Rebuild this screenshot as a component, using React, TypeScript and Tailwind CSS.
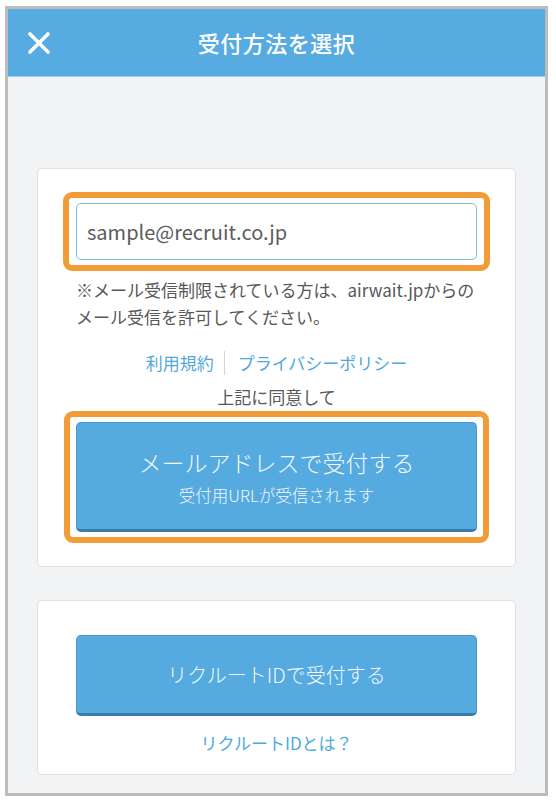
import { useState } from 'react'

const font = { fontFamily: '"Noto Sans CJK JP", "Noto Sans", sans-serif' }

function CloseIcon() {
  return (
    <svg width="24" height="24" viewBox="0 0 24 24" fill="none" stroke="white" strokeWidth="3.6" strokeLinecap="round">
      <path d="M3 3 L21 21" />
      <path d="M21 3 L3 21" />
    </svg>
  )
}

function Highlight({ className }: { className: string }) {
  return <div className={`pointer-events-none absolute rounded-[9px] border-[6px] border-[#f29c38] ${className}`} />
}

export default function App() {
  const [email, setEmail] = useState('sample@recruit.co.jp')

  return (
    <div className="w-[556px] h-[808px] bg-white pt-[6px] pl-[5px]" style={font}>
      <div className="w-[543px] h-[790px] border-[3px] border-[#bcbcbc] bg-[#f2f3f5] flex flex-col">
        {/* header */}
        <header className="relative h-[68px] shrink-0 bg-[#56abe1] border-b border-[#9ad0ee] flex items-center justify-center">
          <button className="absolute left-[19px] top-[22px]">
            <CloseIcon />
          </button>
          <h1 className="text-white text-[22px] font-medium tracking-[0.5px]">受付方法を選択</h1>
        </header>

        <main className="flex flex-col gap-[33px] px-[29px] pt-[91px]">
          {/* mail card */}
          <section className="bg-white border border-[#dedfe2] rounded-[5px] px-[38px] pt-[34px] pb-[34px]">
            <div className="relative">
              <Highlight className="-inset-x-[13px] -inset-y-[11px]" />
              <input
                value={email}
                onChange={(e) => setEmail(e.target.value)}
                className="w-full h-[57px] rounded-[5px] border-[1.5px] border-[#79bde9] px-[10px] text-[20px] text-[#5c5c5c] outline-none"
                style={font}
              />
            </div>

            <p className="mt-[16px] text-[17px] leading-[27px] text-[#585858]">
              ※メール受信制限されている方は、airwait.jpからの
              <br />
              メール受信を許可してください。
            </p>

            <div className="mt-[21px] flex items-center justify-center text-[17px] leading-[24px] text-[#4fa9de]">
              <a className="pr-[10px]">利用規約</a>
              <span className="h-[24px] w-px bg-[#d5d5d5]" />
              <a className="pl-[13px]">プライバシーポリシー</a>
            </div>

            <p className="mt-[10px] text-center text-[17px] leading-[24px] text-[#585858]">上記に同意して</p>

            <div className="relative mt-[13px]">
              <Highlight className="-inset-x-[12px] -inset-y-[11px]" />
              <button className="w-full h-[110px] rounded-[5px] bg-[#55aae0] border border-[#4a97c9] border-b-[3px] border-b-[#3b7bab] flex flex-col items-center justify-center text-[#f2f8fc] font-light">
                <span className="text-[23px] leading-[32px]">メールアドレスで受付する</span>
                <span className="mt-[5px] text-[16.5px] leading-[24px]">受付用URLが受信されます</span>
              </button>
            </div>
          </section>

          {/* recruit id card */}
          <section className="bg-white border border-[#dedfe2] rounded-[5px] px-[38px] pt-[34px] pb-[19px]">
            <button className="w-full h-[81px] rounded-[5px] bg-[#55aae0] border border-[#4a97c9] border-b-[3px] border-b-[#3b7bab] text-[20px] font-light text-[#f2f8fc]">
              リクルートIDで受付する
            </button>
            <p className="mt-[15px] text-center text-[17px] leading-[24px] text-[#4fa9de]">リクルートIDとは？</p>
          </section>
        </main>
      </div>
    </div>
  )
}
